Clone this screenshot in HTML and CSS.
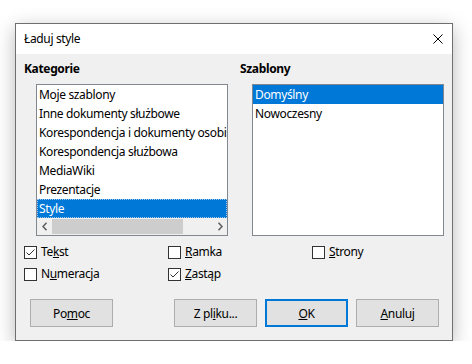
FILE: index.html
```html
<!DOCTYPE html>
<html lang="pl">
<head>
  <meta charset="UTF-8" />
  <title>Ładuj style</title>
  <link rel="stylesheet" href="styles.css">
</head>
<body>
  <div class="screen">
    <div class="dialog">
      <div class="titlebar">
        <span class="title">Ładuj style</span>
        <svg class="close" width="10" height="10" viewBox="0 0 10 10"><path d="M0.5 0.5L9.5 9.5M9.5 0.5L0.5 9.5" stroke="#000" stroke-width="1" fill="none"/></svg>
      </div>

      <div class="content">
        <div class="columns">
          <div class="col">
            <div class="label">Kategorie</div>
            <div class="listbox">
              <ul class="items">
                <li>Moje szablony</li>
                <li>Inne dokumenty służbowe</li>
                <li>Korespondencja i dokumenty osobiste</li>
                <li>Korespondencja służbowa</li>
                <li>MediaWiki</li>
                <li>Prezentacje</li>
                <li class="selected focus">Style</li>
              </ul>
              <div class="hscroll">
                <span class="arrow">
                  <svg width="6" height="9" viewBox="0 0 6 9"><path d="M4.5 0.8L1 4.5L4.5 8.2" stroke="#606060" stroke-width="1.6" fill="none"/></svg>
                </span>
                <div class="track"><div class="thumb"></div></div>
                <span class="arrow">
                  <svg width="6" height="9" viewBox="0 0 6 9"><path d="M1.5 0.8L5 4.5L1.5 8.2" stroke="#606060" stroke-width="1.6" fill="none"/></svg>
                </span>
              </div>
            </div>
          </div>
          <div class="col">
            <div class="label">Szablony</div>
            <div class="listbox">
              <ul class="items">
                <li class="selected">Domyślny</li>
                <li>Nowoczesny</li>
              </ul>
            </div>
          </div>
        </div>

        <div class="options">
          <label class="check"><span class="box"><svg width="11" height="11" viewBox="0 0 11 11"><path d="M1.5 5.5L4 8L9.5 2.5" stroke="#333" stroke-width="1" fill="none"/></svg></span><span>Te<u>k</u>st</span></label>
          <label class="check"><span class="box"></span><span><u>R</u>amka</span></label>
          <label class="check"><span class="box"></span><span><u>S</u>trony</span></label>
          <label class="check"><span class="box"></span><span>N<u>u</u>meracja</span></label>
          <label class="check"><span class="box"><svg width="11" height="11" viewBox="0 0 11 11"><path d="M1.5 5.5L4 8L9.5 2.5" stroke="#333" stroke-width="1" fill="none"/></svg></span><span><u>Z</u>astąp</span></label>
        </div>

        <div class="buttons">
          <button class="btn">Po<u>m</u>oc</button>
          <div class="btn-group">
            <button class="btn">Z pl<u>i</u>ku...</button>
            <button class="btn default"><u>O</u>K</button>
            <button class="btn"><u>A</u>nuluj</button>
          </div>
        </div>
      </div>
    </div>
  </div>
</body>
</html>
```

FILE: styles.css
```css
*{margin:0;padding:0;box-sizing:border-box}
body{font-family:"Noto Sans",sans-serif;font-size:12px;letter-spacing:-0.35px;color:#000;background:#fff}
.screen{padding:23px 0 0 15px}
.dialog{width:438px;height:318px;border:1px solid #6f6f6f;background:#f0f0f0;box-shadow:0 5px 18px rgba(0,0,0,0.28)}
.titlebar{height:30px;background:#fff;display:flex;align-items:center;justify-content:space-between;padding:0 9px 0 8px}
.title{line-height:16px}
.close{display:block}
.content{padding:7px 7px 0 8px}
.columns{display:grid;grid-template-columns:204px 204px;gap:12px}
.label{font-weight:bold;line-height:16px}
.listbox{margin:7px 0 0 12px;width:192px;height:152px;border:1px solid #828790;background:#fff;display:flex;flex-direction:column}
.items{list-style:none;flex:1;overflow:hidden}
.items li{height:19px;line-height:19px;padding-left:2px;white-space:nowrap;overflow:hidden}
.items li.selected{background:#0078d7;color:#fff}
.items li.focus{outline:1px dotted #9cc8ee;outline-offset:-1px}
.hscroll{height:17px;background:#f0f0f0;display:flex;align-items:stretch}
.arrow{width:15px;display:flex;align-items:center;justify-content:center}
.track{flex:1;display:flex;align-items:center}
.thumb{width:131px;height:15px;background:#cdcdcd}
.options{margin-top:5px;display:grid;grid-template-columns:144px 144px 144px;grid-auto-rows:22px}
.check{display:flex;align-items:center;gap:4px;line-height:16px}
.box{width:13px;height:13px;border:1px solid #333;background:#fff;display:flex;align-items:center;justify-content:center}
.box svg{display:block}
.buttons{margin-top:14px;display:flex;justify-content:space-between;padding:0 6px}
.btn{width:83px;height:28px;border:1px solid #adadad;background:#e1e1e1;font-family:inherit;font-size:12px;letter-spacing:-0.35px;color:#000}
.btn.default{border:2px solid #0078d7}
.btn-group{display:flex;gap:8px}
```
